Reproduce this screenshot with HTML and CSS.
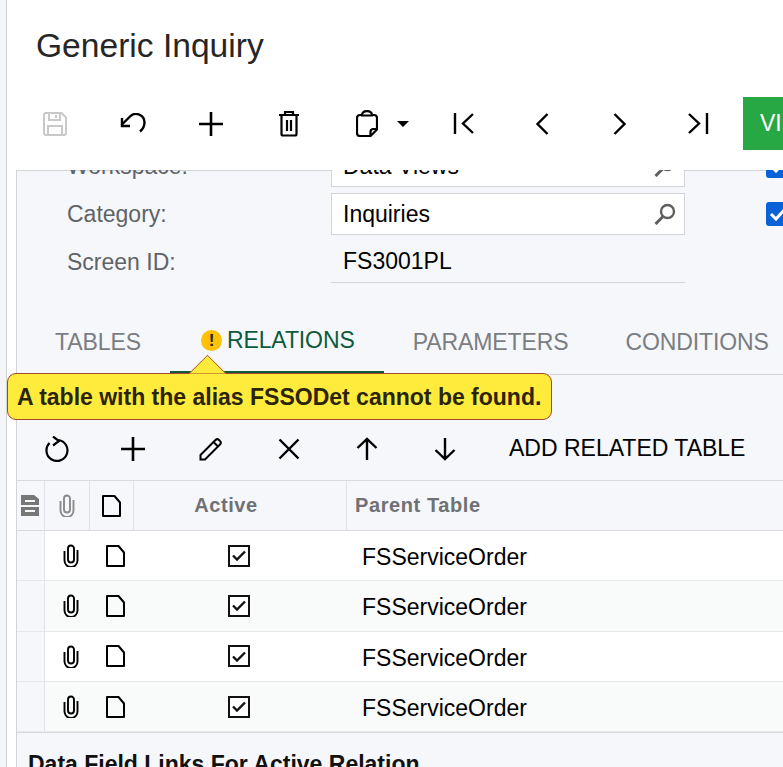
FILE: index.html

```html
<!DOCTYPE html>
<html lang="en">
<head>
    <meta charset="UTF-8">
    <meta name="viewport" content="width=device-width, initial-scale=1.0">
    <title>Generic Inquiry</title>
    <link rel="stylesheet" href="styles.css">
</head>
<body>
<svg class="defs" width="0" height="0">
    <symbol id="i-clip" viewBox="0 0 16 23">
        <path d="M14.500 6v10.500a6.500 6.500 0 0 1-13 0V7M11 15.500V4.500a3 3 0 0 0-6 0v11a3 3 0 0 0 6 0" fill="none" stroke="currentColor" stroke-width="1.900"/>
    </symbol>
    <symbol id="i-doc" viewBox="0 0 19 22">
        <path d="M1 1h11.500l5.500 6.500V21H1z" fill="none" stroke="currentColor" stroke-width="2" stroke-linejoin="round"/>
    </symbol>
    <symbol id="i-plus" viewBox="0 0 26 26">
        <path d="M13 1v24M1 13h24" fill="none" stroke="currentColor" stroke-width="2.600"/>
    </symbol>
</svg>

<div class="app">
    <header class="head">
        <h1 class="title">Generic Inquiry</h1>
        <div class="toolbar">
            <button class="tool muted">
                <svg width="26" height="26" viewBox="0 0 26 26" fill="none" stroke="currentColor" stroke-width="2"><path d="M2 4a2 2 0 0 1 2-2h15.500L24 6.500V22a2 2 0 0 1-2 2H4a2 2 0 0 1-2-2z"/><path d="M7 2v7h11V2M14 4v3M6 24v-9h14v9"/></svg>
            </button>
            <button class="tool">
                <svg width="28" height="22" viewBox="0 0 28 22" fill="none" stroke="currentColor" stroke-width="2.400"><path d="M2.500 12 11 3.500a8.500 8.500 0 0 1 14.500 6c0 3.500-1.500 6.500-4.500 9"/><path d="M3 5v8h8"/></svg>
            </button>
            <button class="tool"><svg width="26" height="26"><use href="#i-plus"/></svg></button>
            <button class="tool">
                <svg width="22" height="27" viewBox="0 0 22 27" fill="none" stroke="currentColor" stroke-width="2.200"><path d="M1 5h20M7 5V2h8v3M3.500 5v19a1.500 1.500 0 0 0 1.500 1.500h12a1.500 1.500 0 0 0 1.500-1.500V5M9 10v11M13 10v11"/></svg>
            </button>
            <button class="tool tool-menu">
                <svg width="22" height="27" viewBox="0 0 22 27" fill="none" stroke="currentColor" stroke-width="2.200"><path d="M5.500 5H4a3 3 0 0 0-3 3v15a3 3 0 0 0 3 3h10.500L21 19.500V8a3 3 0 0 0-3-3h-1.500"/><path d="M6 5.500C6 2.500 8 1.100 11 1.100s5 1.400 5 4.400zM14.500 25.500V22a3 3 0 0 1 3-3H21"/></svg>
                <span class="caret"></span>
            </button>
            <button class="tool">
                <svg width="22" height="22" viewBox="0 0 22 22" fill="none" stroke="currentColor" stroke-width="2.400"><path d="M2 0v21M20 1 10 10.500 20 20"/></svg>
            </button>
            <button class="tool">
                <svg width="14" height="22" viewBox="0 0 14 22" fill="none" stroke="currentColor" stroke-width="2.400"><path d="M12.500 1 2.500 11l10 10"/></svg>
            </button>
            <button class="tool">
                <svg width="14" height="22" viewBox="0 0 14 22" fill="none" stroke="currentColor" stroke-width="2.400"><path d="M1.500 1l10 10-10 10"/></svg>
            </button>
            <button class="tool">
                <svg width="22" height="22" viewBox="0 0 22 22" fill="none" stroke="currentColor" stroke-width="2.400"><path d="M20 0v21M2 1l10 9.500L2 20"/></svg>
            </button>
            <button class="view-btn">VIEW INQUIRY</button>
        </div>
    </header>

    <main class="panel">
        <section class="form">
            <div class="form-row">
                <label class="form-label">Workspace:</label>
                <div class="field">Data Views
                    <svg class="lookup" width="22" height="22" viewBox="0 0 22 22" fill="none" stroke="#5f5f5f" stroke-width="2.400"><circle cx="13.500" cy="8.500" r="6.500"/><path d="M9 13.500 1.500 21" stroke-width="3"/></svg>
                </div>
                <span class="check"><svg width="18" height="14" viewBox="0 0 18 14" fill="none" stroke="#fff" stroke-width="3"><path d="M2 7l5 5 9-10"/></svg></span>
            </div>
            <div class="form-row">
                <label class="form-label">Category:</label>
                <div class="field">Inquiries
                    <svg class="lookup" width="22" height="22" viewBox="0 0 22 22" fill="none" stroke="#5f5f5f" stroke-width="2.400"><circle cx="13.500" cy="8.500" r="6.500"/><path d="M9 13.500 1.500 21" stroke-width="3"/></svg>
                </div>
                <span class="check"><svg width="18" height="14" viewBox="0 0 18 14" fill="none" stroke="#fff" stroke-width="3"><path d="M2 7l5 5 9-10"/></svg></span>
            </div>
            <div class="form-row">
                <label class="form-label">Screen ID:</label>
                <div class="field field-plain">FS3001PL</div>
            </div>
        </section>

        <nav class="tabs">
            <a class="tab">TABLES</a>
            <a class="tab tab-active"><span class="warn-dot">!</span>RELATIONS</a>
            <a class="tab">PARAMETERS</a>
            <a class="tab">CONDITIONS</a>
        </nav>

        <div class="tooltip">A table with the alias FSSODet cannot be found.</div>

        <div class="grid-tools">
            <button class="gtool gtool-refresh">
                <svg width="24" height="26" viewBox="0 0 24 26" fill="none" stroke="currentColor" stroke-width="2.200"><path d="M4.500 7a10.500 10.500 0 1 0 9-3"/><path d="M8 .5 14 5l-6 4.500"/></svg>
            </button>
            <button class="gtool"><svg width="26" height="26"><use href="#i-plus"/></svg></button>
            <button class="gtool">
                <svg width="24" height="24" viewBox="0 0 24 24" fill="none" stroke="currentColor" stroke-width="2"><path d="M1.500 18 16.500 3a2.500 2.500 0 0 1 3.500 0l1 1a2.500 2.500 0 0 1 0 3.500L6 22.500H1.500zM14.500 5l5 5"/></svg>
            </button>
            <button class="gtool">
                <svg width="22" height="22" viewBox="0 0 22 22" fill="none" stroke="currentColor" stroke-width="2.400"><path d="M1.500 1.500l19 19M20.500 1.500l-19 19"/></svg>
            </button>
            <button class="gtool">
                <svg width="22" height="24" viewBox="0 0 22 24" fill="none" stroke="currentColor" stroke-width="2.400"><path d="M11 23V2M1.500 11 11 2l9.500 9"/></svg>
            </button>
            <button class="gtool">
                <svg width="22" height="24" viewBox="0 0 22 24" fill="none" stroke="currentColor" stroke-width="2.400"><path d="M11 1v21M1.500 13l9.500 9 9.500-9"/></svg>
            </button>
            <button class="gtool-text">ADD RELATED TABLE</button>
        </div>

        <div class="grid">
            <div class="grid-row grid-head">
                <div class="cell cell-sel">
                    <svg width="18" height="21" viewBox="0 0 18 21"><path d="M0 0h13l5 4v17H0z" fill="#777"/><path d="M4 6h10M0 11h18M4 16h10" fill="none" stroke="#f5f7fa" stroke-width="2"/></svg>
                </div>
                <div class="cell cell-icon gray"><svg width="16" height="23"><use href="#i-clip"/></svg></div>
                <div class="cell cell-icon"><svg width="19" height="22"><use href="#i-doc"/></svg></div>
                <div class="cell cell-active head-text">Active</div>
                <div class="cell cell-text head-text">Parent Table</div>
            </div>
            <div class="grid-row">
                <div class="cell cell-sel"></div>
                <div class="cell cell-icon"><svg width="16" height="23"><use href="#i-clip"/></svg></div>
                <div class="cell cell-icon"><svg width="19" height="22"><use href="#i-doc"/></svg></div>
                <div class="cell cell-active"><span class="box"><svg width="14" height="11" viewBox="0 0 14 11" fill="none" stroke="#111" stroke-width="2.400"><path d="M1 5.500l4 4 8-8"/></svg></span></div>
                <div class="cell cell-text">FSServiceOrder</div>
            </div>
            <div class="grid-row">
                <div class="cell cell-sel"></div>
                <div class="cell cell-icon"><svg width="16" height="23"><use href="#i-clip"/></svg></div>
                <div class="cell cell-icon"><svg width="19" height="22"><use href="#i-doc"/></svg></div>
                <div class="cell cell-active"><span class="box"><svg width="14" height="11" viewBox="0 0 14 11" fill="none" stroke="#111" stroke-width="2.400"><path d="M1 5.500l4 4 8-8"/></svg></span></div>
                <div class="cell cell-text">FSServiceOrder</div>
            </div>
            <div class="grid-row">
                <div class="cell cell-sel"></div>
                <div class="cell cell-icon"><svg width="16" height="23"><use href="#i-clip"/></svg></div>
                <div class="cell cell-icon"><svg width="19" height="22"><use href="#i-doc"/></svg></div>
                <div class="cell cell-active"><span class="box"><svg width="14" height="11" viewBox="0 0 14 11" fill="none" stroke="#111" stroke-width="2.400"><path d="M1 5.500l4 4 8-8"/></svg></span></div>
                <div class="cell cell-text">FSServiceOrder</div>
            </div>
            <div class="grid-row">
                <div class="cell cell-sel"></div>
                <div class="cell cell-icon"><svg width="16" height="23"><use href="#i-clip"/></svg></div>
                <div class="cell cell-icon"><svg width="19" height="22"><use href="#i-doc"/></svg></div>
                <div class="cell cell-active"><span class="box"><svg width="14" height="11" viewBox="0 0 14 11" fill="none" stroke="#111" stroke-width="2.400"><path d="M1 5.500l4 4 8-8"/></svg></span></div>
                <div class="cell cell-text">FSServiceOrder</div>
            </div>
        </div>

        <h2 class="links-title">Data Field Links For Active Relation</h2>
    </main>
</div>
</body>
</html>
```

FILE: styles.css

```css
html, body {
    margin: 0;
    height: 767px;
    overflow: hidden;
    background-color: #fff;
    color: #000;
    font-family: "Liberation Sans", Arial, sans-serif;
}
.defs {
    position: absolute;
}
button {
    font-family: inherit;
    border: none;
    background: none;
    padding: 0;
    color: #000;
}
.app {
    width: 777px;
    height: 767px;
    margin-left: 6px;
    border-left: 1px solid #cfd1d8;
    box-sizing: border-box;
    display: flex;
    flex-direction: column;
    overflow: hidden;
    box-shadow: -6px 0 0 #f4f5f7;
}
.head {
    flex: 0 0 170px;
    background-color: #fff;
    position: relative;
    z-index: 2;
}
.title {
    margin: 0;
    padding: 25px 0 0 29px;
    font-size: 33.600px;
    line-height: 41px;
    font-weight: 400;
    color: #262626;
}
.toolbar {
    display: flex;
    align-items: center;
    height: 53px;
    margin-top: 31px;
    padding-left: 9px;
}
.tool {
    flex: 0 0 78px;
    height: 53px;
    display: flex;
    align-items: center;
    justify-content: center;
}
.muted {
    color: #c9c9c9;
}
.tool-menu {
    flex-basis: 97px;
    padding-right: 20px;
    position: relative;
}
.caret {
    position: absolute;
    left: 69px;
    top: 24px;
    border-left: 6px solid transparent;
    border-right: 6px solid transparent;
    border-top: 6px solid #000;
}
.view-btn {
    flex: 0 0 auto;
    height: 53px;
    margin-left: 6px;
    padding: 0 17px;
    background-color: #28a745;
    color: #fff;
    font-size: 23px;
    white-space: nowrap;
}
.panel {
    flex: 1;
    margin-left: 9px;
    min-width: 0;
    background-color: #f5f7fa;
    border-left: 1px solid #d2d4da;
    border-top: 1px solid #d2d4da;
    position: relative;
}
.form {
    margin-top: -26px;
    padding-bottom: 33px;
    display: flex;
    flex-direction: column;
    gap: 6px;
}
.form-row {
    display: flex;
    align-items: center;
    height: 42px;
    position: relative;
}
.form-label {
    flex: 0 0 314px;
    padding-left: 50px;
    box-sizing: border-box;
    font-size: 23px;
    color: #5f6368;
}
.field {
    flex: 0 0 354px;
    height: 42px;
    box-sizing: border-box;
    display: flex;
    align-items: center;
    justify-content: space-between;
    padding: 0 8px 0 11px;
    background-color: #fff;
    border: 1px solid #d2d4da;
    font-size: 23px;
}
.field-plain {
    background: none;
    border: none;
    border-bottom: 1px solid #d2d4da;
    padding-left: 12px;
}
.check {
    margin-left: 81px;
    width: 24px;
    height: 24px;
    flex: 0 0 24px;
    border-radius: 3px;
    background-color: #0b62d6;
    display: flex;
    align-items: center;
    justify-content: center;
}
.tabs {
    display: flex;
    height: 59px;
    box-sizing: border-box;
    border-bottom: 1px solid #d2d4da;
}
.tab {
    flex: 0 0 auto;
    box-sizing: border-box;
    padding: 0 28px 6px 29px;
    height: 59px;
    display: flex;
    align-items: center;
    font-size: 23px;
    letter-spacing: -.1px;
    color: #7a7d82;
    white-space: nowrap;
}
.tab:first-child {
    padding-left: 38px;
    padding-right: 29px;
}
.tab-active {
    color: #0d5a3c;
    padding: 0 29px 6px 31px;
    border-bottom: 4px solid #0d5a3c;
    gap: 5px;
}
.warn-dot {
    width: 21px;
    height: 21px;
    border-radius: 50%;
    background-color: #ffc107;
    color: #222;
    font-size: 17px;
    font-weight: 700;
    line-height: 21px;
    text-align: center;
}
.tooltip {
    position: absolute;
    left: -10px;
    top: 202px;
    z-index: 3;
    height: 47px;
    box-sizing: border-box;
    padding: 2px 10px 0 9px;
    display: flex;
    align-items: center;
    background-color: #ffeb3b;
    border: 1px solid #a9432a;
    border-radius: 9px;
    font-size: 23px;
    font-weight: 700;
    color: #2b2409;
    white-space: nowrap;
}
.tooltip::before {
    content: "";
    position: absolute;
    left: 185.500px;
    top: -14.500px;
    width: 27px;
    height: 27px;
    box-sizing: border-box;
    background-color: #ffeb3b;
    border-left: 1px solid #a9432a;
    border-top: 1px solid #a9432a;
    transform: rotate(45deg);
    clip-path: polygon(0 0, 100% 0, 0 100%);
}
.grid-tools {
    display: flex;
    align-items: center;
    height: 105px;
    margin-left: -1px;
    padding-top: 42px;
    box-sizing: border-box;
}
.gtool {
    flex: 0 0 78px;
    height: 40px;
    display: flex;
    align-items: center;
    justify-content: center;
}
.gtool-refresh {
    padding-left: 4px;
}
.gtool-text {
    margin-left: 25px;
    font-size: 23px;
    white-space: nowrap;
}
.grid {
    border-top: 1px solid #d8dade;
    border-bottom: 1px solid #d8dade;
}
.grid-row {
    display: flex;
    height: 50.300px;
    box-sizing: border-box;
    border-bottom: 1px solid #e6e8ec;
    background-color: #fff;
}
.grid-row:nth-child(odd) {
    background-color: #f9fafa;
}
.grid-head,
.grid-row.grid-head {
    height: 50px;
    background-color: #f5f7fa;
    border-bottom-color: #d8dade;
}
.cell {
    display: flex;
    align-items: center;
    box-sizing: border-box;
    font-size: 23px;
}
.cell-sel {
    flex: 0 0 28px;
    background-color: #f5f7fa;
    border-right: 1px solid #e1e3e8;
    justify-content: center;
    padding-right: 2px;
}
.cell-icon {
    flex: 0 0 44px;
    justify-content: center;
    padding-left: 7px;
}
.cell-sel + .cell-icon {
    flex-basis: 45px;
}
.grid-head .cell-icon {
    border-right: 1px solid #e1e3e8;
    padding-left: 0;
}
.gray {
    color: #8a8a8a;
}
.cell-active {
    flex: 0 0 213px;
    justify-content: center;
    padding-right: 3px;
}
.grid-head .cell-active {
    border-right: 1px solid #e1e3e8;
    padding-right: 28px;
}
.cell-text {
    flex: 1;
    padding: 4px 0 0 15px;
}
.head-text {
    font-size: 20px;
    font-weight: 700;
    letter-spacing: .6px;
    color: #6f7175;
}
.grid-head .cell-text {
    padding: 0 0 0 8px;
}
.box {
    width: 22px;
    height: 22px;
    box-sizing: border-box;
    border: 2px solid #111;
    background-color: #fff;
    display: flex;
    align-items: center;
    justify-content: center;
}
.links-title {
    margin: 0;
    padding: 18px 0 0 11px;
    font-size: 23px;
    font-weight: 700;
    color: #111;
    white-space: nowrap;
}
```
